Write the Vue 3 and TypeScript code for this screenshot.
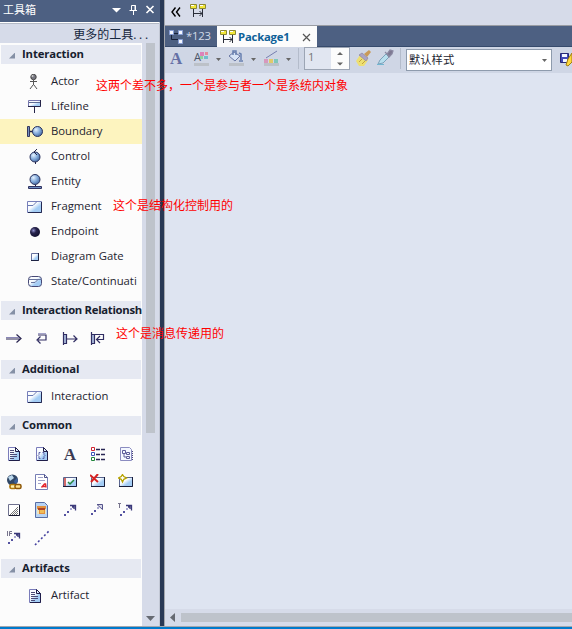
<script setup lang="ts">
interface Tool { icon: string; label: string; active?: boolean }

const interaction: Tool[] = [
  { icon: 'actor', label: 'Actor' },
  { icon: 'lifeline', label: 'Lifeline' },
  { icon: 'boundary', label: 'Boundary', active: true },
  { icon: 'control', label: 'Control' },
  { icon: 'entity', label: 'Entity' },
  { icon: 'fragment', label: 'Fragment' },
  { icon: 'endpoint', label: 'Endpoint' },
  { icon: 'gate', label: 'Diagram Gate' },
  { icon: 'state', label: 'State/Continuati' },
]
const relations: string[] = ['message', 'self', 'recursion', 'call']
const common: string[] = [
  'note', 'constraint', 'text', 'legend', 'hyperdoc',
  'link', 'pdf', 'check', 'remove', 'new',
  'boundarybox', 'image', 'trace', 'realize', 'template',
  'ifflow', 'noteline',
]
</script>

<template>
  <svg class="sprite" width="0" height="0">
    <defs>
      <linearGradient id="blue" x1="0" y1="0" x2="1" y2="1">
        <stop offset="0.4" stop-color="#fafcff" /><stop offset="0.65" stop-color="#a4cdf5" />
      </linearGradient>
      <radialGradient id="ball" cx="0.35" cy="0.32" r="0.75">
        <stop offset="0" stop-color="#e4f2ff" /><stop offset="0.5" stop-color="#88aedd" /><stop offset="1" stop-color="#41669e" />
      </radialGradient>
      <radialGradient id="dark" cx="0.35" cy="0.35" r="0.6">
        <stop offset="0" stop-color="#9292cf" /><stop offset="0.45" stop-color="#28244e" /><stop offset="1" stop-color="#161334" />
      </radialGradient>
    </defs>
    <symbol id="actor" viewBox="0 0 16 16">
      <circle cx="6.500" cy="3" r="2.700" fill="#777781" stroke="#444" /><circle cx="5.500" cy="2" r="1" fill="#ccc" />
      <path d="M6.500 6v5M3 7.500h7M6 11l-3 4M7 11l3 4" stroke="#555" fill="none" />
    </symbol>
    <symbol id="lifeline" viewBox="0 0 16 16">
      <path d="M1 2h13v6H1z" fill="url(#blue)" /><path d="M1.500 7V1.500h12" stroke="#7777ae" fill="none" />
      <path d="M1 7.500h12.500V1M7.500 8v6" stroke="#252448" fill="none" /><path d="M2 3.500h11" stroke="#5d6b94" />
    </symbol>
    <symbol id="boundary" viewBox="0 0 16 16">
      <path d="M.5 2.500h2v10h-2z" fill="#7692c1" stroke="#34365f" /><path d="M3 7.500h3" stroke="#222249" stroke-width="1.500" />
      <circle cx="10.500" cy="7.500" r="5" fill="url(#ball)" stroke="#29315d" />
    </symbol>
    <symbol id="control" viewBox="0 0 16 16">
      <circle cx="8" cy="8" r="5" fill="url(#ball)" stroke="#29315d" /><path d="M10 0L7 3l3 3M8.500 13v2" stroke="#222249" fill="none" />
    </symbol>
    <symbol id="entity" viewBox="0 0 16 16">
      <circle cx="8" cy="5.500" r="5" fill="url(#ball)" stroke="#29315d" /><path d="M8.500 11v2" stroke="#222249" /><path d="M1.500 12.500h13v2h-13z" fill="#6d8cc1" stroke="#303260" />
    </symbol>
    <symbol id="fragment" viewBox="0 0 16 16">
      <path d="M.5 2.500h14v11H.5z" fill="url(#blue)" stroke="#777fba" /><path d="M1 6.500h5l4-4" stroke="#687ab1" fill="none" /><path d="M1 13.500h13.500V3" stroke="#252951" fill="none" />
    </symbol>
    <symbol id="endpoint" viewBox="0 0 16 16"><circle cx="8" cy="8" r="5" fill="url(#dark)" /></symbol>
    <symbol id="gate" viewBox="0 0 16 16">
      <path d="M4.500 4.500h7v7h-7z" fill="url(#blue)" stroke="#66719e" /><path d="M4 11.500h7.500V4" fill="none" stroke="#1d2243" />
    </symbol>
    <symbol id="state" viewBox="0 0 16 16">
      <rect x="1.500" y="2.500" width="13" height="10" rx="3" fill="url(#blue)" stroke="#474a76" /><path d="M2 5.500h12M4 8.500h4l3-3" stroke="#67749e" fill="none" />
    </symbol>
    <symbol id="message" viewBox="0 0 16 16"><path d="M0 9h14M10.500 4.500L15 8.500l-4.500 4" fill="none" stroke="#27234f" stroke-width="1.200" /><path d="M0 7.500h13" stroke="#8986b7" /></symbol>
    <symbol id="self" viewBox="0 0 16 16"><path d="M4 5h8v5H4M6.500 6.500L3 10l3.500 3.500" fill="none" stroke="#302d62" stroke-width="1.200" /><path d="M4 3.500h8" stroke="#a5a4ca" /></symbol>
    <symbol id="recursion" viewBox="0 0 16 16"><path d="M1.500 2v13M2 4.500h2.500v9H2" fill="#a9badc" stroke="#302d62" stroke-width="1.200" /><path d="M5 9h9M11.500 5.500L15 9l-3.500 3" fill="none" stroke="#302d62" stroke-width="1.200" /></symbol>
    <symbol id="call" viewBox="0 0 16 16"><path d="M1.500 2v13M2 4.500h2.500v9H2" fill="#a9badc" stroke="#302d62" stroke-width="1.200" /><path d="M5 4.500h8.500v5H7M10 6L6.500 9.500 10 13" fill="none" stroke="#302d62" stroke-width="1.200" /></symbol>
    <symbol id="page" viewBox="0 0 16 16">
      <path d="M2.500 1.500h7l4 4v9h-11z" fill="url(#blue)" stroke="#7a7cba" /><path d="M3 14.500h10.500V5.500h-4v-4l4 4" fill="none" stroke="#1f1d48" />
    </symbol>
    <symbol id="note" viewBox="0 0 16 16"><use href="#page" /><path d="M4 4.500h4M4 6.500h4M4 8.500h7M4 10.500h7M4 12.500h4" stroke="#4c4b77" /></symbol>
    <symbol id="constraint" viewBox="0 0 16 16"><use href="#page" /><path d="M6.500 6.500H5v2L4 9.500l1 1v2h1.500M8.500 6.500H10v2l1 1-1 1v2H8.500" fill="none" stroke="#5961a6" /></symbol>
    <symbol id="legend" viewBox="0 0 16 16">
      <path d="M1.500 1.500h3v3h-3z" fill="#fff" stroke="#ce2533" /><path d="M1.500 6.500h3v3h-3z" fill="#fff" stroke="#3c56b8" /><path d="M1.500 11.500h3v3h-3z" fill="#fff" stroke="#22863c" />
      <path d="M6 3.500h9M6 8.500h9M6 13.500h9" stroke="#282653" stroke-width="1.500" stroke-dasharray="4 1" />
    </symbol>
    <symbol id="hyperdoc" viewBox="0 0 16 16">
      <path d="M2.500 1.500h9l2 2v11h-11z" fill="#f3f7ff" stroke="#8b8cc0" /><path d="M4.500 4.500h3v3h-3zM8.500 6.500h3v2h-3zM8.500 10.500h3v2h-3zM6 8v3h2" fill="none" stroke="#5b5c99" /><path d="M14.500 5v10" stroke="#4b477b" stroke-dasharray="1 1" />
    </symbol>
    <symbol id="link" viewBox="0 0 16 16">
      <circle cx="6.500" cy="6" r="5.500" fill="#304766" /><path d="M2 3l4-2 2 3-4 3z" fill="#bcd8ec" /><path d="M8 7l3-3 1 4-3 2z" fill="#3c619b" />
      <rect x="4" y="10.500" width="6" height="4" rx="1.500" fill="#fff2ae" stroke="#b17809" stroke-width="1.700" /><rect x="9" y="10.500" width="6" height="4" rx="1.500" fill="#ffe28b" stroke="#8d5708" stroke-width="1.500" />
    </symbol>
    <symbol id="pdf" viewBox="0 0 16 16"><path d="M1.500.5h9l3 3v12h-12z" fill="#fff" stroke="#767eb5" /><path d="M10.500.5v3h3" fill="none" stroke="#4d5086" /><path d="M4 3.500h5M4 6.500h7M4 9.500h3" stroke="#a0a2c9" /><path d="M7.500 13.500l3-3.500h1l.5 3.500M9 12.500h3" fill="none" stroke="#e3262e" stroke-width="1.500" /></symbol>
    <symbol id="box" viewBox="0 0 16 16"><path d="M1.500 3.500h13v9h-13z" fill="url(#blue)" stroke="#59658e" /><path d="M1 12.500h13.500V3" fill="none" stroke="#171d39" /></symbol>
    <symbol id="check" viewBox="0 0 16 16"><use href="#box" /><path d="M3 4v8" stroke="#c43a37" stroke-width="1.500" /><path d="M6 8l2 2 4-4" fill="none" stroke="#258740" stroke-width="1.500" /></symbol>
    <symbol id="remove" viewBox="0 0 16 16"><use href="#box" /><path d="M0 1l8 7M8 0L1 8" stroke="#d72323" stroke-width="2" /></symbol>
    <symbol id="new" viewBox="0 0 16 16"><use href="#box" /><path d="M4.500 .5l1.300 2L8.500 4 5.800 5.300 4.500 8 3.200 5.300 .5 4l2.700-1.500z" fill="#fff" stroke="#b7a300" stroke-width="1.300" /></symbol>
    <symbol id="boundarybox" viewBox="0 0 16 16"><path d="M2.500 2.500h11v11h-11z" fill="#fff" stroke="#6f718e" /><path d="M3 13.500h10.500V3" fill="none" stroke="#171a30" /><path d="M4 12.500h8M5 11.500h7M6 10.500h6M7 9.500h5M8 8.500h4M9 7.500h3M10 6.500h2M11 5.500h1" stroke="#777" stroke-dasharray="1 1" /></symbol>
    <symbol id="image" viewBox="0 0 16 16"><path d="M1.500.5h9l3 3v12h-12z" fill="#b8d4f4" stroke="#576da4" /><path d="M3 4h9v8H3z" fill="#eee5bc" /><path d="M3 4h9v3h-1v5H5V7H3z" fill="#e2903d" /><path d="M4 6h7v2H4z" fill="#ad4227" /><path d="M6 8h4v3H6z" fill="#f0bd59" /></symbol>
    <symbol id="trace" viewBox="0 0 16 16"><path d="M2 14h2v-2H2zM5 11h2V9H5z" fill="#5452a0" /><path d="M8 8h2V6H8z" fill="#aaa9d2" /><path d="M8 3.500h5.500v5M10 5h2v2" fill="none" stroke="#3b397a" stroke-width="1.300" /></symbol>
    <symbol id="realize" viewBox="0 0 16 16"><path d="M1 13h2v-2H1zM4 10h2V8H4z" fill="#5452a0" /><path d="M7 7h2V5H7z" fill="#aaa9d2" /><path d="M7 2.500h5.500v5z" fill="#d7d7e7" stroke="#55548c" /></symbol>
    <symbol id="template" viewBox="0 0 16 16"><use href="#trace" /><path d="M0 1.500h3M1.500 2v4" stroke="#77748d" /></symbol>
    <symbol id="ifflow" viewBox="0 0 16 16"><use href="#trace" /><path d="M1.500 1v5M6 1.500H3.500V6M4 3.500h2" fill="none" stroke="#77748d" /></symbol>
    <symbol id="noteline" viewBox="0 0 16 16"><path d="M1 15L15 1" stroke="#4744a0" stroke-width="1.600" stroke-dasharray="2 2.300" /></symbol>
    <symbol id="sequence" viewBox="0 0 16 14">
      <path d="M.5.500h6v4h-6zM9.500.500h6v4h-6z" fill="#f3e838" stroke="#8b8733" /><path d="M1 1.500h3M10 1.500h3" stroke="#fff" /><path d="M3.500 5v8M12.500 5v8M4 9.500h8M9.500 7l2.500 2.500L9.500 12" fill="none" stroke="#292d38" />
    </symbol>
    <symbol id="blocks" viewBox="0 0 15 14"><path d="M2.500 3v6.500h7M5 3.500h5" stroke="#17213a" fill="none" /><path d="M.5.500h4v4h-4zM9.500.500h4v4h-4zM9.500 9.500h4v4h-4z" fill="#f3f7ff" stroke="#889ed5" /></symbol>
  </svg>

  <div class="window">
    <div class="body">
      <aside class="toolbox">
        <header class="title">
          <span>工具箱</span>
          <svg width="48" height="14" viewBox="0 0 48 14">
            <path d="M2 5h9L6.500 9.500z" fill="#fff" />
            <path d="M21.500 7.500V2.500h4v5M19.500 7.500h7.500M23.500 8v4M25 2v6" fill="none" stroke="#fff" />
            <path d="M36.500 3l7 7M43.500 3l-7 7" stroke="#fff" stroke-width="1.600" />
          </svg>
        </header>
        <div class="more">更多的工具<span>...</span></div>
        <div class="scroller">
          <div class="groups">
            <h3><i></i><span>Interaction</span></h3>
            <ul>
              <li v-for="t in interaction" :key="t.icon" :class="{ active: t.active }">
                <svg width="16" height="16"><use :href="'#' + t.icon" /></svg><span>{{ t.label }}</span>
              </li>
            </ul>
            <h3 class="gap"><i></i><span class="long">Interaction Relationsh</span></h3>
            <div class="relations"><svg v-for="r in relations" :key="r" width="16" height="16"><use :href="'#' + r" /></svg></div>
            <h3><i></i><span>Additional</span></h3>
            <ul><li><svg width="16" height="16"><use href="#fragment" /></svg><span>Interaction</span></li></ul>
            <h3 class="gap"><i></i><span>Common</span></h3>
            <div class="common">
              <template v-for="c in common" :key="c">
                <span v-if="c === 'text'" class="letter">A</span>
                <svg v-else width="16" height="16"><use :href="'#' + c" /></svg>
              </template>
            </div>
            <h3><i></i><span>Artifacts</span></h3>
            <ul><li><svg width="16" height="16"><use href="#note" /></svg><span>Artifact</span></li></ul>
          </div>
          <div class="vbar"><div class="thumb"></div><b></b></div>
        </div>
      </aside>

      <main>
        <div class="crumbs">
          <svg width="10" height="10" viewBox="0 0 10 10"><path d="M4.500.5L1 5l3.500 4.500M9 .5L5.500 5 9 9.500" fill="none" stroke="#000" stroke-width="1.400" /></svg>
          <svg width="16" height="14"><use href="#sequence" /></svg>
        </div>
        <div class="tabs">
          <div class="tab"><svg width="15" height="14"><use href="#blocks" /></svg><span>*123</span></div>
          <div class="tab current">
            <svg width="16" height="14"><use href="#sequence" /></svg><span>Package1</span>
            <svg width="9" height="9" viewBox="0 0 9 9"><path d="M1 1l7 7M8 1L1 8" stroke="#555" stroke-width="1.200" /></svg>
          </div>
        </div>
        <div class="toolbar">
          <svg width="134" height="24" viewBox="0 0 134 24">
            <text x="5" y="17" class="serif-a">A</text>
            <path d="M29 16h15v3H29zM64 16h15v3H64zM99 16h15v3H99z" fill="#bcc1c8" />
            <text x="29" y="14" class="sans-a">A</text>
            <path d="M35 5h4v4h-4z" fill="#dc83bb" /><path d="M40 5h3v3h-3z" fill="#e58a9d" /><path d="M35 9h3v3h-3z" fill="#8fd3a0" /><path d="M39 9h4v3h-4z" fill="#73bdce" />
            <path d="M51 11h5l-2.500 3zM86 11h5l-2.500 3zM121 11h5l-2.500 3z" fill="#666" />
            <path d="M64 9l5-4 6 4-5 5z" fill="#d8e4f6" stroke="#6977a3" /><path d="M68 8V4h3v4M74 6l2 1v6M74 14h4" fill="none" stroke="#6880b0" stroke-width="1.500" />
            <path d="M101 11l11-7" stroke="#777fb0" /><path d="M99 12h4v4h-4z" fill="#d799bd" /><path d="M104 12h4v4h-4z" fill="#e1ca6a" /><path d="M109 12h4v4h-4z" fill="#80c7ba" />
            <path d="M133.500 1v21" stroke="#b4bccb" />
          </svg>
          <div class="spin"><span>1</span><svg width="18" height="20" viewBox="0 0 18 20"><path d="M6 6.500h6L9 3.500zM6 14h6l-3 3z" fill="#666" /></svg></div>
          <svg class="paint" width="46" height="24" viewBox="0 0 46 24">
            <path d="M1 14l4-6 5 1 3 4-4 6H4z" fill="#eddf72" /><path d="M4 8l3-2 6 5-2 3z" fill="#aaa3c4" stroke="#8d84a2" stroke-width=".7" /><path d="M9 7l5-4 2 2-4 5z" fill="#c99a58" /><path d="M4 15l3-3M7 17l3-3" stroke="#c3a43e" />
            <path d="M23 17l2-4 6-6 3 3-6 6z" fill="#b8dfee" stroke="#7ba2ba" /><path d="M30 5l5 5M32 7l3-4 3 1-1 3-3 3z" fill="#7d7992" stroke="#8b89a2" stroke-width="1.200" /><path d="M22 17.500h7" stroke="#72b6d1" />
            <path d="M45.500 1v21" stroke="#b4bccb" />
          </svg>
          <div class="combo"><span>默认样式</span><svg width="7" height="5" viewBox="0 0 7 5"><path d="M1 1h5L3.500 4z" fill="#666" /></svg></div>
          <svg class="save" width="12" height="18" viewBox="0 0 12 18"><path d="M.5 3.500h8v9h-8z" fill="#4249b8" stroke="#272974" /><path d="M2 4h5v3H2zM3 9h4v3H3z" fill="#f3f7ff" /><path d="M6 15l2-6 4-6v9l-4 4z" fill="#ffd83b" stroke="#a17d13" /></svg>
        </div>
        <div class="canvas"></div>
        <div class="hbar"><b></b><div></div></div>
      </main>
    </div>
    <footer></footer>
    <p class="remark first">这两个差不多，一个是参与者一个是系统内对象</p>
    <p class="remark second">这个是结构化控制用的</p>
    <p class="remark third">这个是消息传递用的</p>
  </div>
</template>

<style>
body { margin: 0; overflow: hidden; }
</style>
<style scoped>
.sprite { position: absolute; }
.window { position: relative; width: 572px; height: 629px; display: flex; flex-direction: column; overflow: hidden; font: 11.3px/18px "Open Sans", "Noto Sans CJK SC", sans-serif; color: #1e2430; background: #d6dbe9; }
svg { display: block; flex: none; }
.body { flex: 1; display: flex; min-height: 0; }
.toolbox { width: 160px; box-sizing: border-box; border-right: 1px solid #c2c7d4; flex: none; display: flex; flex-direction: column; }
.title { height: 22px; box-sizing: border-box; background: #4d6082; color: #fff; display: flex; justify-content: space-between; align-items: center; padding: 0 2px 2px 3px; font-size: 11px; width: 160px; }
.more { height: 21px; border-top: 1px solid #fff; box-shadow: inset 0 1px #b3b9c5; padding: 2px 8px 0 0; box-sizing: border-box; text-align: right; font-size: 12px; line-height: 20px; color: #17273e; white-space: nowrap; }
.more span { letter-spacing: 2.800px; }
.scroller { flex: 1; display: flex; min-height: 0; }
.groups { width: 142px; flex: none; background: #fcfcfc; padding-top: 2px; box-sizing: border-box; overflow: hidden; }
h3 { margin: 0 1px; height: 19px; background: #e6e9f2; font-size: 11.300px; line-height: 18px; font-weight: 700; display: flex; align-items: center; color: #17202e; white-space: nowrap; }
h3 span { position: relative; top: -1px; letter-spacing: -0.130px; }
h3 i { width: 6px; height: 6px; margin: 2px 7px 0 8px; flex: none; background: #8590a5; clip-path: polygon(100% 0, 100% 100%, 0 100%); }
h3.gap { margin-top: 7px; }
h3 .long { letter-spacing: -0.300px; }
ul { margin: 0; padding: 5px 0 0; list-style: none; }
li { height: 25px; display: flex; align-items: center; gap: 8px; padding-left: 27px; white-space: nowrap; }
li span { position: relative; top: -1px; }
li.active { background: #fdf4bf; }
.relations { height: 40px; display: flex; gap: 12px; padding: 10px 0 0 6px; box-sizing: border-box; }
.common { display: grid; grid-template-columns: repeat(5, 16px); grid-auto-rows: 16px; gap: 12px; padding: 11px 0 13px 6px; }
.letter { font: bold 17px/17px "Liberation Serif", serif; color: #3b3b54; text-align: center; }
.serif-a { font: bold 17px "Liberation Serif", serif; fill: #6570a5; }
.sans-a { font: 11px "Open Sans", sans-serif; fill: #4b5568; }
.vbar { flex: 1; display: flex; flex-direction: column; justify-content: space-between; padding-left: 4px; }
.thumb { width: 9px; height: 390px; background: #bec3cb; }
.vbar b { width: 9px; height: 5px; background: #666a72; clip-path: polygon(0 0, 100% 0, 50% 100%); margin-bottom: 5px; }
main { flex: 1; min-width: 0; border-left: 4px solid #293955; display: flex; flex-direction: column; box-shadow: inset 1px 0 #a4a7ad; padding-left: 1px; }
.crumbs { height: 26px; box-sizing: border-box; border-bottom: 1px solid #999ca3; display: flex; gap: 9px; padding: 4px 0 0 6px; }
.crumbs svg:first-child { margin-top: 3px; }
.tabs { height: 21px; background: #4d6082; display: flex; box-shadow: inset 0 -1px #364a6c; }
.tab { width: 52px; display: flex; align-items: center; box-sizing: border-box; padding-left: 4px; gap: 2px; color: #d1d9e7; }
.tab span { position: relative; top: -1px; letter-spacing: -0.200px; }
.current { width: 100px; background: #fcfcfc; color: #0e6198; font-weight: 700; padding: 0 6px 0 3px; }
.current span { top: 0; }
.current svg:last-child { margin: 2px 0 0 auto; }
.toolbar { height: 26px; background: #cfd6e5; display: flex; }
.spin { width: 46px; height: 23px; box-sizing: border-box; border: 1px solid #9ca5b4; margin-left: 5px; display: flex; justify-content: space-between; background: #e1e6f1; color: #777; flex: none; }
.spin span { padding-left: 3px; }
.spin svg { background: #fcfcfc; height: 21px; }
.paint { margin-left: 5px; }
.combo { width: 146px; height: 22px; margin: 2px 8px 0 5px; box-sizing: border-box; border: 1px solid #8e9bad; background: #fff; display: flex; align-items: center; justify-content: space-between; padding: 0 3px 0 2px; flex: none; }
.save { margin-top: 3px; }
.canvas { flex: 1; background: #dee4f1; }
.hbar { height: 17px; display: flex; align-items: center; padding-left: 5px; gap: 6px; background: #d6dbe9; }
.hbar b { width: 5px; height: 9px; background: #666a72; clip-path: polygon(100% 0, 100% 100%, 0 50%); }
.hbar div { flex: 1; height: 9px; background: #bec3cb; }
footer { height: 2px; background: #007acc; border-top: 1px solid #a4a7ad; }
.remark { position: absolute; margin: 0; font: 12px/16px "Noto Sans CJK SC", sans-serif; color: #f00; white-space: nowrap; }
.first { left: 96px; top: 77px; }
.second { left: 113px; top: 197px; }
.third { left: 116px; top: 325px; }
</style>
